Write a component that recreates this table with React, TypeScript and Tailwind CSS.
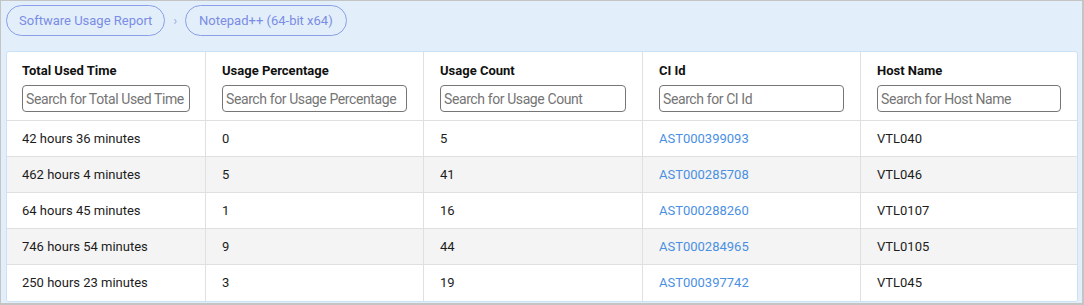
type Row = {
  time: string;
  percent: string;
  count: string;
  ciId: string;
  host: string;
};

const columns = [
  { label: "Total Used Time", placeholder: "Search for Total Used Time" },
  { label: "Usage Percentage", placeholder: "Search for Usage Percentage" },
  { label: "Usage Count", placeholder: "Search for Usage Count" },
  { label: "CI Id", placeholder: "Search for CI Id" },
  { label: "Host Name", placeholder: "Search for Host Name" },
];

const rows: Row[] = [
  { time: "42 hours 36 minutes", percent: "0", count: "5", ciId: "AST000399093", host: "VTL040" },
  { time: "462 hours 4 minutes", percent: "5", count: "41", ciId: "AST000285708", host: "VTL046" },
  { time: "64 hours 45 minutes", percent: "1", count: "16", ciId: "AST000288260", host: "VTL0107" },
  { time: "746 hours 54 minutes", percent: "9", count: "44", ciId: "AST000284965", host: "VTL0105" },
  { time: "250 hours 23 minutes", percent: "3", count: "19", ciId: "AST000397742", host: "VTL045" },
];

const grid = "grid grid-cols-[198px_218px_219px_218px_1fr]";
const cell = "border-l border-[#e0e0e0] px-4";

export default function App() {
  return (
    <div
      className="h-[305px] w-[1084px] overflow-hidden border-t border-l border-r-2 border-b-2 border-[#c4c4c4] bg-[#e2effb] pt-[4px] pl-[5px] pr-[4px] text-[13px] text-[#1c1c1c]"
      style={{ fontFamily: "Roboto, 'Noto Sans', sans-serif" }}
    >
      {/* Breadcrumb */}
      <nav className="flex h-[31px] items-center">
        <a
          href="#"
          className="flex h-[31px] items-center rounded-full border border-[#8b9ee8] px-[12px] text-[13px] text-[#7a8ce4]"
        >
          Software Usage Report
        </a>
        <span className="mx-[8px] text-[12px] text-[#9aa6d8]">›</span>
        <a
          href="#"
          className="flex h-[31px] items-center rounded-full border border-[#8b9ee8] px-[13px] text-[13px] text-[#7a8ce4]"
        >
          Notepad++ (64-bit x64)
        </a>
      </nav>

      {/* Table card */}
      <div className="mt-[15px] overflow-hidden rounded-[3px] border border-[#cbe1f5] bg-white">
        <div className={`${grid} h-[69px] border-b border-[#e0e0e0]`}>
          {columns.map((col, i) => (
            <div
              key={col.label}
              className={`${i === 0 ? "px-[15px]" : cell} pt-[10px]`}
            >
              <div className="h-[18px] text-[13px] leading-[18px] font-bold text-[#111]">{col.label}</div>
              <input
                type="text"
                placeholder={col.placeholder}
                className="mt-[5px] block h-[27px] w-full rounded-[4px] border border-[#767676] px-[3px] text-[14px] tracking-[-0.4px] placeholder:text-[#757575] focus:outline-none"
              />
            </div>
          ))}
        </div>

        {rows.map((row, r) => (
          <div
            key={row.ciId}
            className={`${grid} h-[36px] ${r < rows.length - 1 ? "border-b border-[#e0e0e0]" : ""} ${
              r % 2 === 1 ? "bg-[#f4f4f4]" : "bg-white"
            }`}
          >
            <div className="flex items-center px-[15px]">{row.time}</div>
            <div className={`${cell} flex items-center`}>{row.percent}</div>
            <div className={`${cell} flex items-center`}>{row.count}</div>
            <div className={`${cell} flex items-center`}>
              <a href="#" className="text-[#4a90e2]">
                {row.ciId}
              </a>
            </div>
            <div className={`${cell} flex items-center`}>{row.host}</div>
          </div>
        ))}
      </div>
    </div>
  );
}
